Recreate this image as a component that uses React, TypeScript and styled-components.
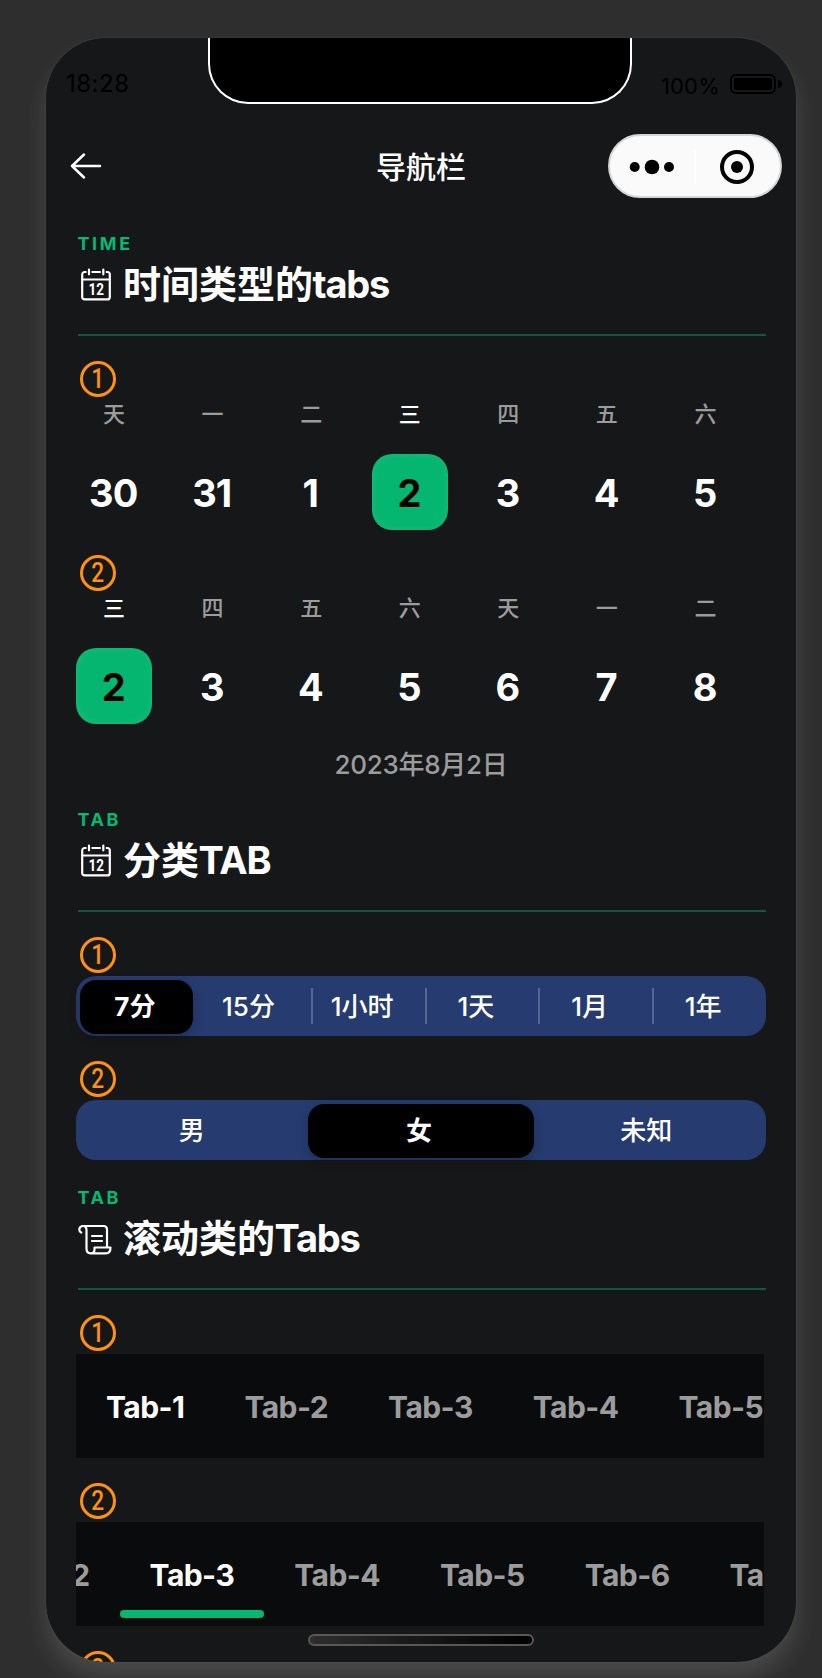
import React from "react";
import styled, { createGlobalStyle } from "styled-components";

const GlobalStyle = createGlobalStyle`
  * { box-sizing: border-box; }
  body {
    margin: 0;
    background: #2e2e2e;
    font-family: Inter, "Noto Sans CJK SC", sans-serif;
    color: #fff;
    overflow: hidden;
  }
`;

const Stage = styled.div`
  height: 1678px;
  width: 822px;
  padding: 38px 26px 0 46px;
  overflow: hidden;
`;

const Phone = styled.main`
  position: relative;
  width: 750px;
  height: 1624px;
  border-radius: 60px;
  background: #161719;
  overflow: hidden;
  box-shadow: 0 16px 24px rgba(255, 255, 255, 0.13), 0 0 2px rgba(255, 255, 255, 0.12);
`;

const StatusBar = styled.header`
  height: 84px;
  display: flex;
  align-items: flex-start;
  padding: 0 13px 0 20px;
  color: #000;
`;

const Clock = styled.span`
  width: 142px;
  margin-top: 31px;
  font-size: 24px;
  line-height: 30px;
  letter-spacing: 0.5px;
`;

const Notch = styled.div`
  width: 424px;
  height: 66px;
  border: 2px solid #fff;
  border-top: 0;
  border-radius: 0 0 40px 40px;
  background: #000;
`;

const Power = styled.div`
  flex: 1;
  margin-top: 34px;
  display: flex;
  justify-content: flex-end;
  gap: 10px;
  font-size: 22px;
  line-height: 28px;
  letter-spacing: 0.2px;

  svg { margin-top: 2px; }
`;

const NavBar = styled.nav`
  height: 84px;
  display: grid;
  grid-template-columns: 1fr auto 1fr;
  align-items: center;
  padding: 4px 14px 0 22px;
`;

const NavTitle = styled.h1`
  margin: 2px 8px 0 0;
  font-size: 30px;
  line-height: 40px;
  font-weight: 500;
`;

const Capsule = styled.div`
  justify-self: end;
  width: 174px;
  height: 64px;
  display: flex;
  align-items: center;
  border: 2px solid #d5d5d5;
  border-radius: 32px;
  background: #fafafa;
`;

const Content = styled.div`
  padding: 0 30px;
`;

const SectionHead = styled.section`
  height: 130px;
  margin: 0 0 0 2px;
  padding-top: 24px;
  border-bottom: 2px solid #0f5a3e;
`;

const Eyebrow = styled.div`
  margin-left: -0.5px;
  font-size: 18px;
  line-height: 28px;
  font-weight: 700;
  letter-spacing: 2.6px;
  color: #06b872;
`;

const Title = styled.h2`
  display: flex;
  align-items: center;
  margin: 0;
  height: 52px;
  font-size: 38px;
  line-height: 52px;
  font-weight: 700;

  svg { margin: 2px 9px 0 0; }
`;

const Latin = styled.span`
  margin-left: -0.5px;
  letter-spacing: -1.2px;
`;

const BadgeRow = styled.div`
  height: 64px;
  padding: 25px 0 0 4px;
`;

const Badge = styled.div`
  display: flex;
  justify-content: center;
  width: 36px;
  height: 36px;
  border: 3px solid #ff910f;
  border-radius: 50%;
  color: #ff910f;
  font: 500 27px/31px Roboto, sans-serif;

  span { transform: scaleX(0.84); }
`;

const Week = styled.div`
  display: grid;
  grid-template-columns: repeat(7, 1fr);
`;

const Day = styled.div`
  width: 76px;
  text-align: center;
`;

const Weekday = styled.div<{ $active: boolean }>`
  height: 54px;
  font-size: 22px;
  line-height: 28px;
  font-weight: 500;
  color: ${(p) => (p.$active ? "#fff" : "#9c9c9d")};
`;

const DateTile = styled.div<{ $active: boolean }>`
  height: 76px;
  padding-right: 1.5px;
  border-radius: 20px;
  font-size: 38px;
  line-height: 78px;
  font-weight: 700;
  letter-spacing: -0.8px;
  color: ${(p) => (p.$active ? "#000" : "#fff")};
  background: ${(p) => (p.$active ? "#04b66f" : "none")};
  box-shadow: ${(p) => (p.$active ? "inset 0 0 12px rgba(255,255,255,.08)" : "none")};
`;

const Picked = styled.div`
  height: 58px;
  padding: 24px 0 0;
  text-align: center;
  font-size: 26px;
  line-height: 33px;
  font-weight: 500;
  letter-spacing: -0.3px;
  color: #9c9c9d;
`;

const Segmented = styled.div`
  height: 60px;
  display: flex;
  padding: 4px 6px 2px 2px;
  border-radius: 20px;
  background: #263b6f;
`;

const Segment = styled.div<{ $active: boolean; $divided: boolean }>`
  position: relative;
  flex: 1 1 0;
  z-index: ${(p) => (p.$active ? 0 : 1)};
  text-align: center;
  font-size: 26px;
  line-height: 54px;
  font-weight: ${(p) => (p.$active ? 700 : 500)};

  &::before {
    content: "";
    display: ${(p) => (p.$active || p.$divided ? "block" : "none")};
    position: absolute;
    z-index: -1;
    top: ${(p) => (p.$active ? "0" : "8px")};
    left: ${(p) => (p.$active ? "2.3px" : "5.7px")};
    width: ${(p) => (p.$active ? "calc(100% - 0.8px)" : "2px")};
    height: ${(p) => (p.$active ? "54px" : "36px")};
    border-radius: ${(p) => (p.$active ? "16px" : "0")};
    background: ${(p) => (p.$active ? "#000" : "#576791")};
    box-shadow: ${(p) => (p.$active ? "0 4px 12px rgba(0,0,0,.2)" : "none")};
  }
`;

const ScrollTabs = styled.div`
  width: 688px;
  height: 104px;
  overflow: hidden;
  background: #0a0b0d;
`;

const TabStrip = styled.div<{ $scroll: number }>`
  display: flex;
  width: max-content;
  margin-left: ${(p) => -p.$scroll}px;
`;

const Tab = styled.div<{ $active: boolean; $underline: boolean }>`
  height: 104px;
  padding: 0 30px;
  font-size: 30px;
  line-height: 106px;
  font-weight: 700;
  letter-spacing: -0.55px;
  color: ${(p) => (p.$active ? "#fff" : "#9c9c9d")};
  position: relative;

  &::after {
    content: "";
    display: ${(p) => (p.$underline ? "block" : "none")};
    position: absolute;
    left: 0;
    bottom: 8px;
    width: 100%;
    height: 8px;
    border-radius: 4px;
    background: #04b66f;
  }
`;

const HomeIndicator = styled.div`
  position: absolute;
  left: 262px;
  bottom: 16px;
  width: 226px;
  height: 12px;
  border: 2px solid #5b5757;
  border-radius: 6px;
  background: linear-gradient(90deg, #2e2e2e, #000);
`;

const CalendarIcon = () => (
  <svg width="36" height="38" viewBox="0 0 36 38" fill="none" stroke="#fff" strokeWidth="2.2" strokeLinecap="round">
    <rect x="4.2" y="6" width="27.6" height="27.4" rx="2.5" />
    <path d="M4.2 13.5H31.8" />
    <path d="M11 3.7v4.6M25.3 3.7v4.6" stroke="#161719" strokeWidth="5" strokeLinecap="butt" />
    <path d="M11 3.7v4.6M25.3 3.7v4.6" />
    <text
      x="10.6"
      y="29"
      fill="#fff"
      stroke="none"
      fontFamily="Roboto, sans-serif"
      fontWeight="700"
      fontSize="16.5"
      textLength="15.5"
      lengthAdjust="spacingAndGlyphs"
    >
      12
    </text>
  </svg>
);

const ScrollIcon = () => (
  <svg width="36" height="38" viewBox="0 0 36 38" fill="none" stroke="#fff" strokeWidth="2.2" strokeLinecap="round" strokeLinejoin="round">
    <path d="M3.2 12.5C.2 11 .8 6 5 6H25.500C28 6 29 7.300 29 9.500V27" />
    <path d="M5 6C7.600 6 8.500 8 8.500 10V28.500C8.500 31.800 10 33.300 12.500 33.300H28C31 33.300 32.500 31.500 32.500 27.500H16.500V29.500C16.500 32 15.200 33.300 12.800 33.300" />
    <path d="M14 16H24M14 21H24" />
  </svg>
);

const SectionHeader = ({
  label,
  title,
  latin,
  icon,
}: {
  label: string;
  title: string;
  latin: string;
  icon: React.ReactNode;
}) => (
  <SectionHead>
    <Eyebrow>{label}</Eyebrow>
    <Title>
      {icon}
      {title}
      <Latin>{latin}</Latin>
    </Title>
  </SectionHead>
);

const NumberBadge = ({ n }: { n: number }) => (
  <BadgeRow>
    <Badge>
      <span>{n}</span>
    </Badge>
  </BadgeRow>
);

const WeekTabs = ({ days, dates, active }: { days: string[]; dates: number[]; active: number }) => (
  <Week>
    {days.map((d, i) => (
      <Day key={d}>
        <Weekday $active={i === active}>{d}</Weekday>
        <DateTile $active={i === active}>{dates[i]}</DateTile>
      </Day>
    ))}
  </Week>
);

const SegmentTabs = ({ items, active }: { items: string[]; active: number }) => (
  <Segmented>
    {items.map((t, i) => (
      <Segment key={t} $active={i === active} $divided={i > active + 1}>
        {t}
      </Segment>
    ))}
  </Segmented>
);

const StripTabs = ({
  count,
  active,
  scroll,
  underline,
}: {
  count: number;
  active: number;
  scroll: number;
  underline?: boolean;
}) => (
  <ScrollTabs>
    <TabStrip $scroll={scroll}>
      {Array.from({ length: count }, (_, i) => i + 1).map((n) => (
        <Tab key={n} $active={n === active} $underline={!!underline && n === active}>
          Tab-{n}
        </Tab>
      ))}
    </TabStrip>
  </ScrollTabs>
);

export default function App() {
  return (
    <>
      <GlobalStyle />
      <Stage>
        <Phone>
          <StatusBar>
            <Clock>18:28</Clock>
            <Notch />
            <Power>
              100%
              <svg width="53" height="20" viewBox="0 0 53 20">
                <rect x="1" y="1" width="44" height="18" rx="5" fill="none" stroke="#000" strokeWidth="2" />
                <rect x="4" y="4" width="38" height="12" rx="2" />
                <path d="M48 6a4 4 0 0 1 0 8z" />
              </svg>
            </Power>
          </StatusBar>
          <NavBar>
            <svg width="36" height="36" viewBox="0 0 36 36" fill="none" stroke="#fff" strokeWidth="2.5" strokeLinecap="round" strokeLinejoin="round">
              <path d="M32 18H4M16 6.5L4 18l12 11.5" />
            </svg>
            <NavTitle>导航栏</NavTitle>
            <Capsule>
              <svg width="170" height="60" viewBox="0 0 170 60">
                <circle cx="24.7" cy="31" r="5" />
                <circle cx="42" cy="31" r="7.3" />
                <circle cx="59" cy="31" r="5" />
                <path d="M85 14v34" stroke="#fff" strokeWidth="2" />
                <circle cx="127" cy="31" r="15" fill="none" stroke="#000" strokeWidth="4" />
                <circle cx="127" cy="31" r="6" />
              </svg>
            </Capsule>
          </NavBar>
          <Content>
            <SectionHeader label="TIME" title="时间类型的" latin="tabs" icon={<CalendarIcon />} />
            <NumberBadge n={1} />
            <WeekTabs days={["天", "一", "二", "三", "四", "五", "六"]} dates={[30, 31, 1, 2, 3, 4, 5]} active={3} />
            <NumberBadge n={2} />
            <WeekTabs days={["三", "四", "五", "六", "天", "一", "二"]} dates={[2, 3, 4, 5, 6, 7, 8]} active={0} />
            <Picked>2023年8月2日</Picked>
            <SectionHeader label="TAB" title="分类" latin="TAB" icon={<CalendarIcon />} />
            <NumberBadge n={1} />
            <SegmentTabs items={["7分", "15分", "1小时", "1天", "1月", "1年"]} active={0} />
            <NumberBadge n={2} />
            <SegmentTabs items={["男", "女", "未知"]} active={1} />
            <SectionHeader label="TAB" title="滚动类的" latin="Tabs" icon={<ScrollIcon />} />
            <NumberBadge n={1} />
            <StripTabs count={5} active={1} scroll={0} />
            <NumberBadge n={2} />
            <StripTabs count={7} active={3} scroll={238.5} underline />
            <NumberBadge n={3} />
          </Content>
          <HomeIndicator />
        </Phone>
      </Stage>
    </>
  );
}
